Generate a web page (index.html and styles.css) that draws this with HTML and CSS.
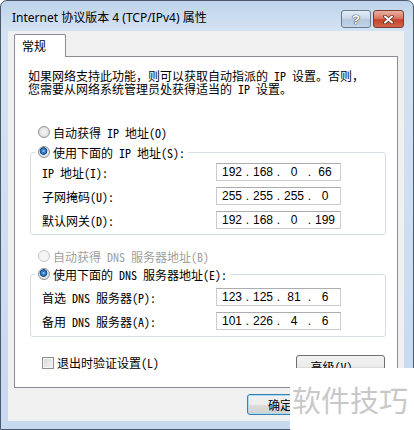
FILE: index.html
```html
<!DOCTYPE html>
<html lang="zh-CN">
<head>
  <meta charset="UTF-8">
  <title>Internet 协议版本 4 (TCP/IPv4) 属性</title>
  <link rel="stylesheet" href="styles.css">
</head>
<body>

  <div class="window">
    <div class="titlebar">
      <span class="title">Internet 协议版本 4 (TCP/IPv4) 属性</span>
      <div class="caption-btns">
        <span class="cap-btn help">?</span>
        <span class="cap-btn close">
          <svg width="11" height="9" viewBox="0 0 11 9">
            <path d="M2 1.5 L9 7.5 M9 1.5 L2 7.5" stroke="#5a2a22" stroke-width="3.6" stroke-linecap="round"/>
            <path d="M2 1.5 L9 7.5 M9 1.5 L2 7.5" stroke="#fff" stroke-width="2" stroke-linecap="round"/>
          </svg>
        </span>
      </div>
    </div>

    <div class="client">
      <div class="tabs"><span class="tab">常规</span></div>

      <div class="panel">
        <p class="intro">如果网络支持此功能，则可以获取自动指派的 IP 设置。否则，<br>您需要从网络系统管理员处获得适当的 IP 设置。</p>

        <div class="radio-row first"><span class="radio"></span>自动获得 IP 地址(O)</div>
        <fieldset class="group">
          <legend class="radio-row"><span class="radio checked"></span>使用下面的 IP 地址(S):</legend>
          <div class="fields">
            <div class="field">
              <span class="label">IP 地址(I):</span>
              <div class="ipbox"><span class="oct">192</span><span class="dot">.</span><span class="oct">168</span><span class="dot">.</span><span class="oct">0</span><span class="dot">.</span><span class="oct">66</span></div>
            </div>
            <div class="field">
              <span class="label">子网掩码(U):</span>
              <div class="ipbox"><span class="oct">255</span><span class="dot">.</span><span class="oct">255</span><span class="dot">.</span><span class="oct">255</span><span class="dot">.</span><span class="oct">0</span></div>
            </div>
            <div class="field">
              <span class="label">默认网关(D):</span>
              <div class="ipbox"><span class="oct">192</span><span class="dot">.</span><span class="oct">168</span><span class="dot">.</span><span class="oct">0</span><span class="dot">.</span><span class="oct">199</span></div>
            </div>
          </div>
        </fieldset>

        <div class="radio-row dns disabled"><span class="radio"></span>自动获得 DNS 服务器地址(B)</div>
        <fieldset class="group dns-group">
          <legend class="radio-row"><span class="radio checked"></span>使用下面的 DNS 服务器地址(E):</legend>
          <div class="fields">
            <div class="field">
              <span class="label">首选 DNS 服务器(P):</span>
              <div class="ipbox"><span class="oct">123</span><span class="dot">.</span><span class="oct">125</span><span class="dot">.</span><span class="oct">81</span><span class="dot">.</span><span class="oct">6</span></div>
            </div>
            <div class="field">
              <span class="label">备用 DNS 服务器(A):</span>
              <div class="ipbox"><span class="oct">101</span><span class="dot">.</span><span class="oct">226</span><span class="dot">.</span><span class="oct">4</span><span class="dot">.</span><span class="oct">6</span></div>
            </div>
          </div>
        </fieldset>

        <div class="bottom-row">
          <span class="check-row"><span class="checkbox"></span>退出时验证设置(L)</span>
          <button class="btn advanced">高级(V)...</button>
        </div>
      </div>

      <div class="footer">
        <button class="btn default">确定</button>
      </div>
    </div>
  </div>

  <div class="watermark">软件技巧</div>

</body>
</html>
```

FILE: styles.css
```css
* {
  box-sizing: border-box;
}
body {
  margin: 0;
  width: 414px;
  height: 430px;
  overflow: hidden;
  position: relative;
  background: #fff;
  font-family: "Noto Sans Mono CJK SC", "Noto Sans CJK SC", sans-serif;
  font-size: 12px;
  color: #000;
}
.window {
  height: 430px;
  display: flex;
  flex-direction: column;
  background: linear-gradient(to bottom, #bed3ea 0, #d4e3f3 30px, #c6d9ee 100%);
  border: 1px solid #4a5a6c;
  border-radius: 7px 7px 0 0;
  padding: 0 9px 8px 7px;
}
.titlebar {
  height: 30px;
  flex: none;
  display: flex;
  align-items: flex-start;
  padding-top: 9px;
}
.title {
  margin-left: 4px;
  line-height: 16px;
  font-family: "Noto Sans", "Noto Sans CJK SC", sans-serif;
  font-size: 12px;
}
.caption-btns {
  margin-left: auto;
  display: flex;
  gap: 2px;
}
.cap-btn {
  height: 18px;
  border: 1px solid #6b7b8e;
  border-radius: 3px;
  display: flex;
  align-items: center;
  justify-content: center;
}
.help {
  width: 30px;
  background: linear-gradient(to bottom, #e3ecf6 0, #c9d8ea 45%, #b3c7dd 55%, #c2d5ea 100%);
  color: #fff;
  font-family: "Liberation Sans", sans-serif;
  font-weight: bold;
  font-size: 13px;
  text-shadow: 0 0 1px #3a4a5e, 0 0 1px #3a4a5e, 0 0 1px #3a4a5e;
}
.close {
  width: 31px;
  border-color: #7a3a30;
  background: linear-gradient(to bottom, #eab0a0 0, #d97a63 45%, #c4432c 55%, #d2664a 100%);
}
.client {
  flex: 1;
  background: #f0f0f0;
  padding: 3px 6px 0 6px;
  display: flex;
  flex-direction: column;
}
.tabs {
  display: flex;
  height: 22px;
  flex: none;
}
.tab {
  width: 52px;
  height: 23px;
  background: #fff;
  border: 1px solid #898c95;
  border-bottom: none;
  border-radius: 2px 2px 0 0;
  padding-left: 7px;
  line-height: 21px;
  position: relative;
  z-index: 1;
}
.panel {
  height: 332px;
  flex: none;
  background: #fff;
  border: 1px solid #898c95;
  padding: 12px 0 0 13px;
}
.intro {
  margin: 0;
  line-height: 13px;
}
.radio-row {
  display: flex;
  align-items: center;
  height: 20px;
  padding-left: 10px;
}
.radio-row.first {
  margin-top: 27px;
}
.radio-row.dns {
  height: 18px;
  margin-top: 12px;
}
.disabled {
  color: #a0a0a0;
}
.radio {
  width: 12px;
  height: 12px;
  border: 1px solid #8e8f8f;
  border-radius: 50%;
  margin-right: 3px;
  background: radial-gradient(circle at 50% 50%, #f4f4f4 0, #e2e2e2 70%, #cfcfcf 100%);
}
.disabled .radio {
  border-color: #c6c6c6;
  background: #f4f4f4;
}
.radio.checked {
  background: radial-gradient(circle at 45% 40%, #a9dcff 0, #3b86d0 1.5px, #1b4f8f 3.5px, #e9e9e9 4.2px, #d4d4d4 100%);
}
.group {
  margin: 0 11px 0 2px;
  border: 1px solid #d5dfe5;
  border-radius: 3px;
  padding: 0 0 5px 11px;
  min-width: 0;
}
.group legend {
  margin-left: -7px;
  padding: 0 3px 0 3px;
}
.fields {
  display: flex;
  flex-direction: column;
  gap: 6px;
  padding-top: 1px;
}
.dns-group {
  padding-bottom: 6px;
}
.dns-group legend {
  height: 18px;
}
.dns-group .fields {
  padding-top: 5px;
}
.field {
  display: flex;
  align-items: center;
  height: 18px;
}
.label {
  width: 174px;
  flex: none;
}
.ipbox {
  width: 125px;
  height: 18px;
  border: 1px solid #c9ccd2;
  border-top-color: #abadb3;
  background: #fff;
  display: flex;
  align-items: center;
  padding-left: 3px;
  font-family: "Liberation Sans", sans-serif;
  font-size: 12px;
}
.oct {
  width: 24px;
  text-align: center;
}
.dot {
  width: 7px;
  text-align: center;
}
.bottom-row {
  display: flex;
  justify-content: space-between;
  align-items: flex-start;
  margin-top: 18px;
  margin-right: 12px;
}
.check-row {
  display: flex;
  align-items: center;
  height: 13px;
  margin-top: 1px;
  margin-left: 14px;
}
.checkbox {
  width: 12px;
  height: 12px;
  border: 1px solid #8e8f8f;
  margin-right: 3px;
  background: linear-gradient(135deg, #d6d6d6 0, #f6f6f6 100%);
  box-shadow: inset 0 0 0 1px #f4f4f4;
}
.btn {
  height: 23px;
  border: 1px solid #707070;
  border-radius: 3px;
  background: linear-gradient(to bottom, #f2f2f2 0, #ebebeb 50%, #dddddd 51%, #cfcfcf 100%);
  font-family: "Noto Sans Mono CJK SC", "Noto Sans CJK SC", sans-serif;
  font-size: 12px;
  color: #000;
  padding: 0;
}
.advanced {
  width: 89px;
}
.footer {
  display: flex;
  padding: 6px 0 0 233px;
}
.footer .btn {
  width: 66px;
  height: 21px;
}
.btn.default {
  border-color: #3c7fb1;
  box-shadow: inset 0 0 0 1px #a8dcf5;
}
.watermark {
  position: absolute;
  left: 290px;
  top: 368px;
  width: 124px;
  height: 62px;
  background: #fff;
  color: #c8c8c8;
  font-family: "Noto Sans CJK SC", sans-serif;
  font-size: 29px;
  line-height: 1;
  padding: 17px 0 0 2px;
  white-space: nowrap;
}
```
